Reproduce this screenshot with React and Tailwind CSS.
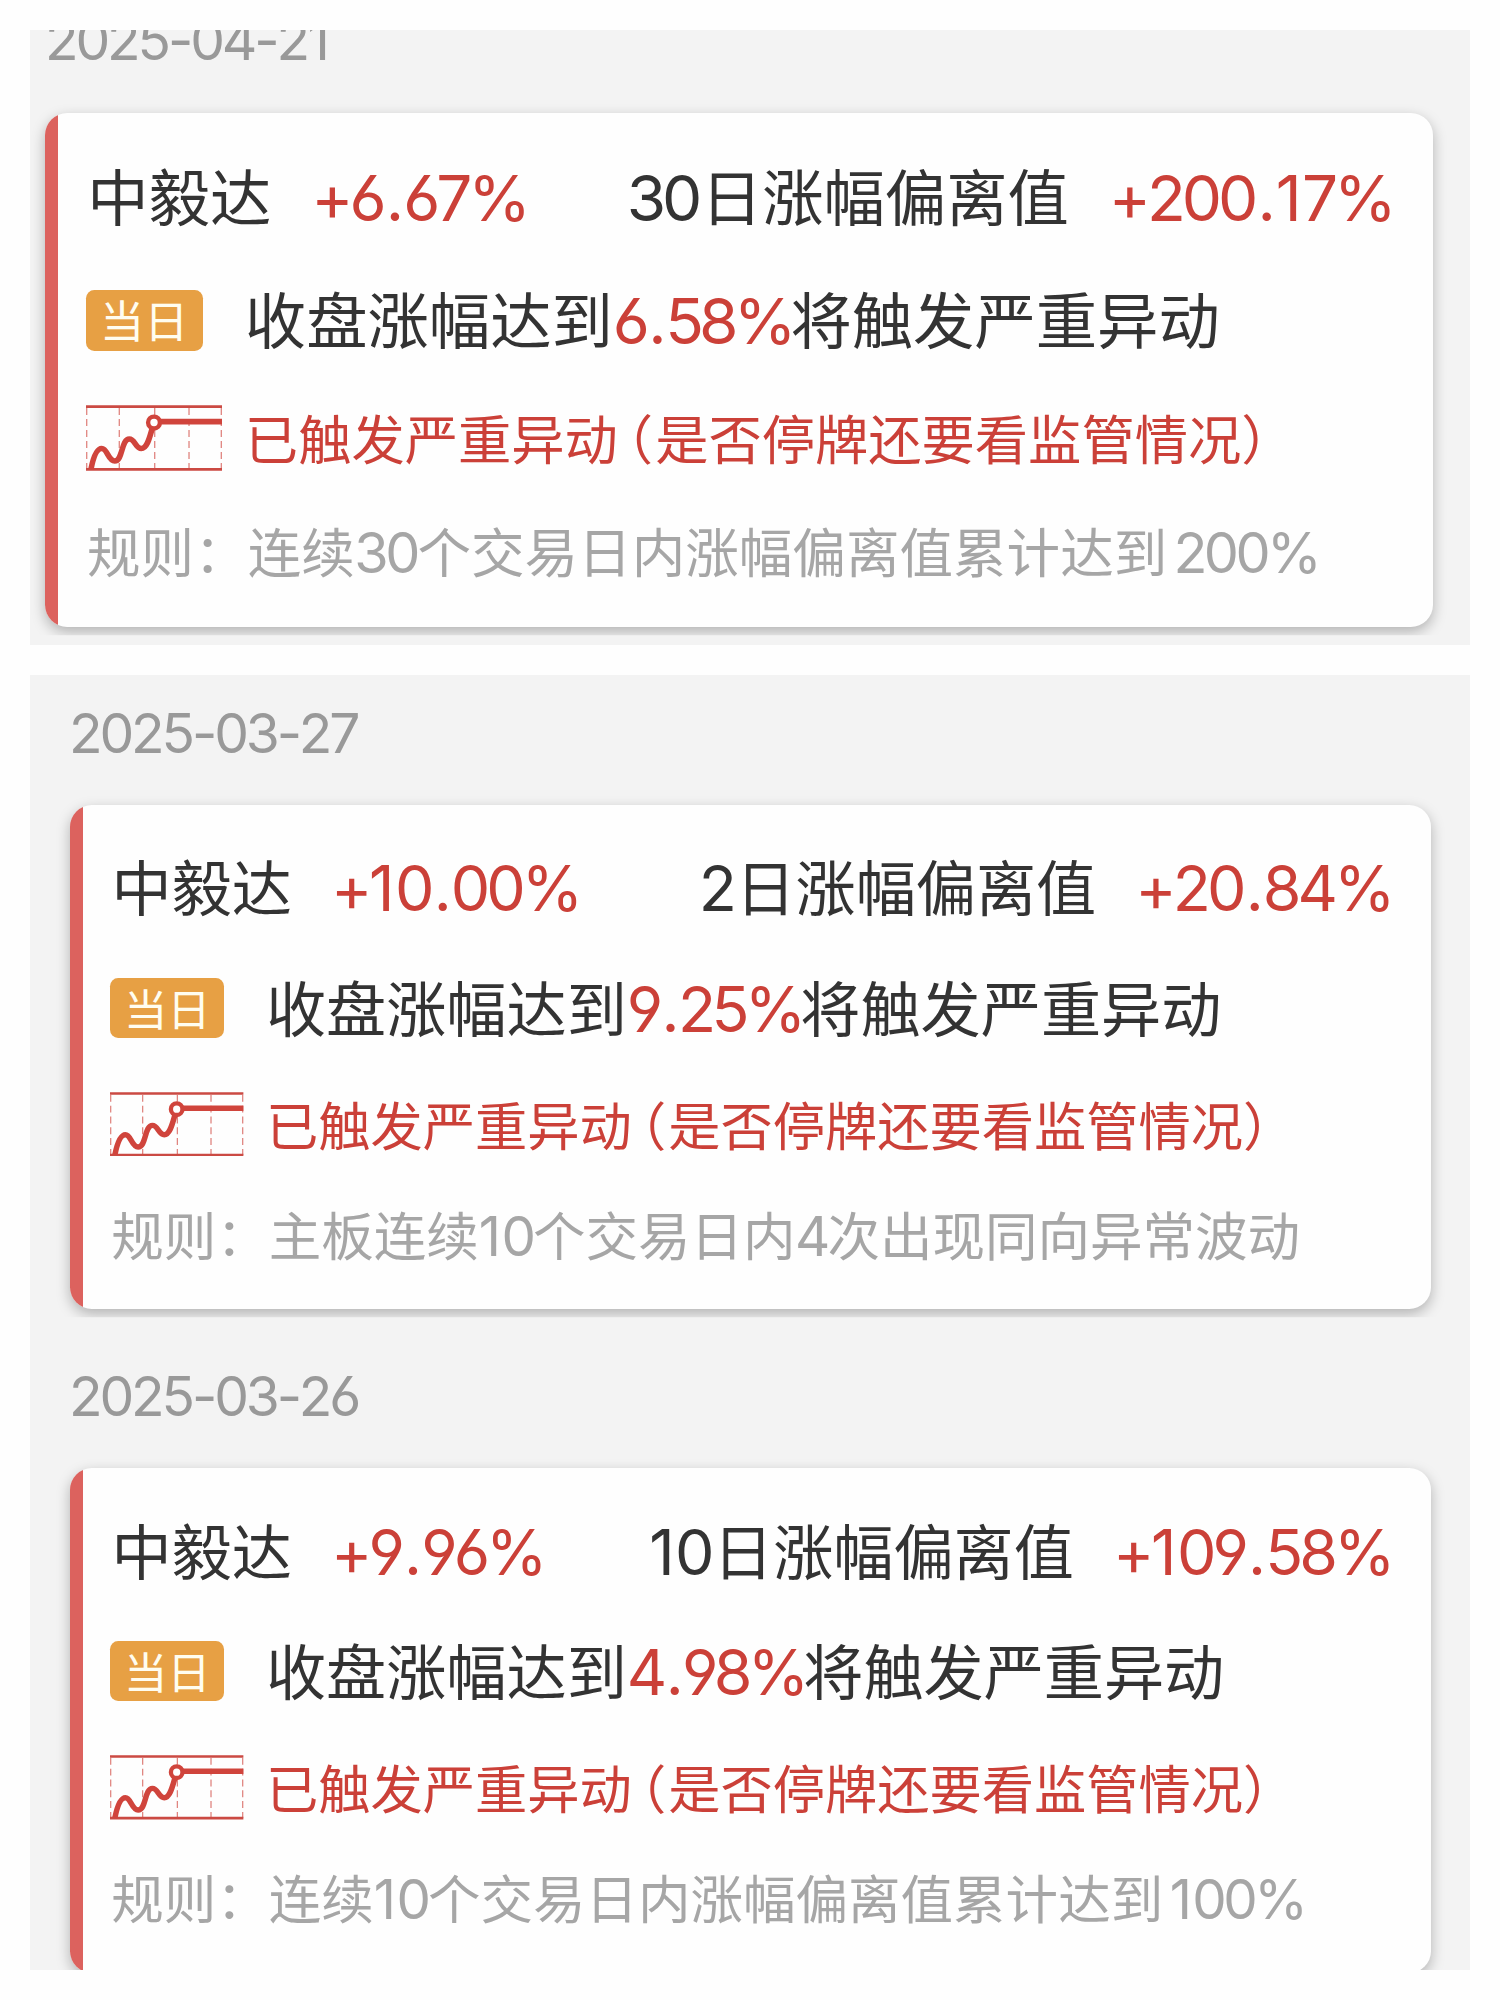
const records = [
  {
    date: '2025-04-21',
    name: '中毅达',
    change: '+6.67%',
    days: '30',
    deviation: '+200.17%',
    threshold: '6.58%',
    rule: ['连续', '30', '个交易日内涨幅偏离值累计达到', '200%'],
  },
  {
    date: '2025-03-27',
    name: '中毅达',
    change: '+10.00%',
    days: '2',
    deviation: '+20.84%',
    threshold: '9.25%',
    rule: ['主板连续', '10', '个交易日内', '4', '次出现同向异常波动'],
  },
  {
    date: '2025-03-26',
    name: '中毅达',
    change: '+9.96%',
    days: '10',
    deviation: '+109.58%',
    threshold: '4.98%',
    rule: ['连续', '10', '个交易日内涨幅偏离值累计达到', '100%'],
  },
]

// Tight figures, with some air put back round the narrow ones
const narrow = {
  '.': 'mx-[0.05em]',
  1: 'ml-[0.01em] mr-[0.07em]',
}

const Num = ({ children, className = '', tracking = 'tracking-[-0.063em]' }) => (
  <span
    className={`font-['Inter','Noto_Sans_CJK_SC',sans-serif] text-[1.04em] leading-none [font-kerning:none] [font-feature-settings:'cv03','cv04'] ${tracking} ${className}`}
  >
    {children.split(/([.1])/).map((part, index) =>
      narrow[part] ? (
        <span key={index} className={narrow[part]}>
          {part}
        </span>
      ) : (
        part
      )
    )}
  </span>
)

const TrendIcon = () => (
  <svg viewBox="0 0 136 66" className="w-[9.8em] h-[4.76em] flex-shrink-0" fill="none" stroke="#d0443c">
    <g strokeWidth="1.3" strokeDasharray="7 4" opacity="0.65">
      <path d="M0.7 3V64M33.3 3V64M68.7 3V64M103 3V64M135.3 3V64" />
    </g>
    <path d="M0 1.5H136M0 64.3H136" strokeWidth="2.8" stroke="#cb4a43" />
    <path
      d="M5 64C7 54 10 43.5 15.7 43.5C21.5 43.5 22 56 28.7 56C37 56 35 34 43.3 34C49 34 49.5 43.5 55.3 43.5C61 43.5 63.5 33 66 24"
      strokeWidth="5.6"
    />
    <path d="M74 16.6H136" strokeWidth="5.6" />
    <circle cx="68" cy="17.5" r="5.9" strokeWidth="4.4" fill="#fff" />
  </svg>
)

// Everything inside is sized in em, so the card scales with its own font size
const RecordCard = ({ record, className }) => (
  <div
    className={`flex-shrink-0 h-[37.05em] rounded-[1.6em] overflow-hidden bg-[#fefefe] flex shadow-[0_5px_14px_rgba(0,0,0,0.27)] [clip-path:inset(-12px_-24px_-8px_-24px)] ${className}`}
  >
    <div className="w-[0.92em] bg-[#dc625e] flex-shrink-0" />
    <div className="flex-1 pt-[1.6em] pl-[2.03em] pr-[2.9em] whitespace-nowrap text-[#333]">
      <div className="h-[8.93em] pl-[0.1em] flex items-center justify-between">
        <div className="flex items-baseline text-[4.42em] leading-none gap-[0.65em]">
          <span>{record.name}</span>
          <Num className="text-[#cb4038]">{record.change}</Num>
        </div>
        <div className="flex items-baseline text-[4.42em] leading-none gap-[0.65em]">
          <span>
            <Num className="mr-[0.04em]">{record.days}</Num>日涨幅偏离值
          </span>
          <Num className="text-[#cb4038]">{record.deviation}</Num>
        </div>
      </div>

      <div className="h-[8.79em] flex items-center">
        <div className="w-[8.4em] h-[4.4em] pb-[0.1em] rounded-[0.6em] bg-[#e7a044] flex-shrink-0 flex items-center justify-center">
          <span className="text-[3.18em] leading-none text-[#fffdf0]">当日</span>
        </div>
        <div className="ml-[3.05em]">
          <p className="text-[4.42em] leading-none">
            收盘涨幅达到
            <Num className="-mr-[0.02em] text-[#cb4038]" tracking="tracking-[-0.075em]">
              {record.threshold}
            </Num>
            将触发严重异动
          </p>
        </div>
      </div>

      <div className="h-[8.24em] flex items-center text-[#cb4038]">
        <TrendIcon />
        <div className="ml-[1.65em] pb-[0.2em]">
          <p className="text-[3.84em] leading-none">
            已触发严重异动<span className="-ml-[0.34em] mr-[0.04em]">（</span>是否停牌还要看监管情况<span>）</span>
          </p>
        </div>
      </div>

      <div className="h-[8.1em] pl-[0.08em] flex items-center text-[#a6a6a6]">
        <p className="text-[3.86em] leading-none">
          规则：
          {record.rule.map((part, index) =>
            /\d/.test(part) ? (
              <Num key={index} className={part.endsWith('%') ? 'ml-[0.11em]' : '-ml-[0.01em] mr-[0.01em]'}>
                {part}
              </Num>
            ) : (
              <span key={index}>{part}</span>
            )
          )}
        </p>
      </div>
    </div>
  </div>
)

const DateLabel = ({ children, className }) => (
  <div className={`flex-shrink-0 text-[#999] text-[53px] leading-[64px] ${className}`}>
    <Num tracking="tracking-[-0.057em]">{children}</Num>
  </div>
)

const App = () => {
  const [first, second, third] = records

  return (
    <div className="w-[1500px] h-[2000px] bg-[#fefefe] p-[30px] overflow-hidden font-['Noto_Sans_CJK_SC',sans-serif]">
      <section className="h-[615px] bg-[#f3f3f3] overflow-hidden flex flex-col">
        <DateLabel className="-mt-[25px] ml-[15px]">{first.date}</DateLabel>
        <RecordCard record={first} className="mt-[44px] ml-[15px] w-[1388px] text-[13.88px]" />
      </section>

      <section className="mt-[30px] h-[1295px] bg-[#f3f3f3] overflow-hidden flex flex-col">
        <DateLabel className="mt-[23px] ml-[39px]">{second.date}</DateLabel>
        <RecordCard record={second} className="mt-[43px] ml-[40px] w-[1361px] text-[13.61px]" />
        <DateLabel className="mt-[52px] ml-[39px]">{third.date}</DateLabel>
        <RecordCard record={third} className="mt-[43px] ml-[40px] w-[1361px] text-[13.61px]" />
      </section>
    </div>
  )
}

export default App
